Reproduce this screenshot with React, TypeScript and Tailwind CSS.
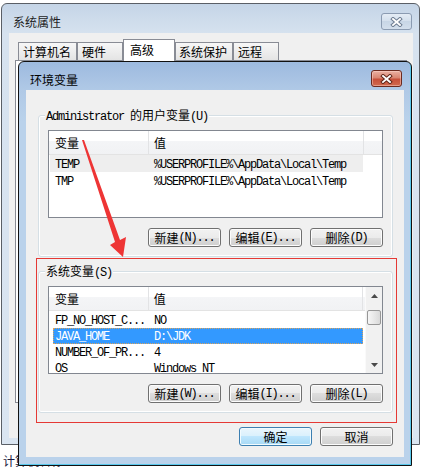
import React from "react";

const M = ({ children }: { children: React.ReactNode }) => (
  <span className="font-['Liberation_Mono',monospace] tracking-[-1.2px]">{children}</span>
);

function XGlyph({ dark }: { dark: string }) {
  return (
    <svg width="13" height="10" viewBox="0 0 13 10">
      <path d="M3 2 L10 8 M10 2 L3 8" stroke={dark} strokeWidth="3.8" strokeLinecap="square" fill="none" />
      <path d="M3 2 L10 8 M10 2 L3 8" stroke="#ffffff" strokeWidth="1.9" strokeLinecap="square" fill="none" />
    </svg>
  );
}

function Btn({ children, primary }: { children: React.ReactNode; primary?: boolean }) {
  return (
    <div
      className={
        primary
          ? "flex h-[19px] w-[73px] items-center justify-center rounded-[3px] border border-[#3c7fb1] bg-[linear-gradient(#eaf6fd_0%,#d9f0fc_50%,#bee6fd_50%,#a7d9f5_100%)] text-[12px] leading-[12px] shadow-[inset_0_0_0_1px_#f2fbfe]"
          : "flex h-[19px] w-[73px] items-center justify-center rounded-[3px] border border-[#707070] bg-[linear-gradient(#f2f2f2_0%,#ebebeb_50%,#dddddd_50%,#cfcfcf_100%)] text-[12px] leading-[12px] shadow-[inset_0_0_0_1px_#fcfcfc]"
      }
    >
      {children}
    </div>
  );
}

function Group({ legend, children }: { legend: React.ReactNode; children: React.ReactNode }) {
  return (
    <div className="h-[142px] w-[355px] rounded-[3px] border border-[#d5dfe5] shadow-[inset_0_0_0_1px_#ffffff]">
      <div className="-mt-[7px] ml-[6px] w-fit bg-[#f0f0f0] px-[1px] text-[12px] leading-[12px] text-black">{legend}</div>
      {children}
    </div>
  );
}

function Header({ wide }: { wide?: boolean }) {
  return (
    <div className="flex h-[24px] border-b border-[#e3e3e3] bg-[linear-gradient(#ffffff_0%,#ffffff_42%,#f4f5f7_42%,#f1f2f4_100%)] text-[12px] leading-[12px]">
      <div className="flex w-[100px] items-center border-r border-[#e2e3e5] pl-[6px]">变量</div>
      <div className="flex w-[215px] items-center border-r border-[#e2e3e5] pl-[5px]">值</div>
      <div className={wide ? "flex-1" : "w-[2px]"} />
    </div>
  );
}

function Arrow({ dir }: { dir: "up" | "down" }) {
  return (
    <div className="flex h-[17px] items-center justify-center">
      <svg width="7" height="4" viewBox="0 0 7 4">
        {dir === "up" ? <path d="M3.5 0 L7 4 L0 4 Z" fill="#4a4a4a" /> : <path d="M0 0 L7 0 L3.5 4 Z" fill="#4a4a4a" />}
      </svg>
    </div>
  );
}

export default function App() {
  return (
    <div className="relative h-[467px] w-[422px] overflow-hidden bg-white font-['Noto_Sans_CJK_SC',sans-serif] text-[12px] text-black">
      {/* background text */}
      <div className="absolute left-[3px] top-[455px] text-[12px] leading-[12px] text-[#1a1a40]">计算机名称</div>

      {/* Outer window: 系统属性 */}
      <div className="absolute left-[1px] top-[3px] flex h-[442px] w-[419px] flex-col rounded-t-[6px] border border-[#5a5f66] bg-[linear-gradient(#c5d5e7_0px,#d6e2ef_30px,#dae5f1_100%)]">
        <div className="flex h-[29px] items-start">
          <div className="pl-[11px] pt-[12px] text-[12px] leading-[12px] text-[#1e1e1e]">系统属性</div>
          <div className="ml-auto mr-[7px] mt-[9px] flex h-[17px] w-[31px] items-center justify-center rounded-[3px] border border-[#8b9bb1] bg-[linear-gradient(#e4ecf5,#d3dfec_50%,#c8d6e6_50%,#d3dfec)]">
            <XGlyph dark="#6e7d92" />
          </div>
        </div>
        <div className="mb-[6px] ml-[7px] mr-[6px] flex-1 bg-[#f0f0f0] px-[6px] pt-[6px]">
          <div className="flex items-end pl-[3px]">
            <div className="flex h-[18px] w-[59px] items-center border border-b-0 border-[#898c95] bg-[linear-gradient(#f7f7f7,#e4e4e4)] pl-[4px] leading-[12px]">计算机名</div>
            <div className="ml-[0px] flex h-[18px] w-[46px] items-center border border-b-0 border-[#898c95] bg-[linear-gradient(#f7f7f7,#e4e4e4)] pl-[4px] leading-[12px]">硬件</div>
            <div className="relative z-10 -mb-[1px] flex h-[22px] w-[52px] items-center border border-b-0 border-[#898c95] bg-white pb-[2px] pl-[6px] leading-[12px]">高级</div>
            <div className="flex h-[18px] w-[58px] items-center border border-b-0 border-[#898c95] bg-[linear-gradient(#f7f7f7,#e4e4e4)] pl-[3px] leading-[12px]">系统保护</div>
            <div className="flex h-[18px] w-[46px] items-center border border-b-0 border-[#898c95] bg-[linear-gradient(#f7f7f7,#e4e4e4)] pl-[4px] leading-[12px]">远程</div>
          </div>
          <div className="h-[343px] border border-[#898c95] bg-white" />
        </div>
      </div>

      {/* Inner window: 环境变量 */}
      <div className="absolute left-[18px] top-[61px] flex h-[405px] w-[394px] flex-col rounded-t-[6px] border border-[#111111] bg-[linear-gradient(#9dbadf_0px,#b0c9e6_28px,#bad2eb_60px,#bad2eb_100%)] shadow-[inset_-1px_-1px_0_#59c8ec]">
        <div className="flex h-[28px] items-start">
          <div className="pl-[11px] pt-[12px] text-[12px] leading-[12px] text-black">环境变量</div>
          <div className="ml-auto mr-[9px] mt-[8px] flex h-[17px] w-[31px] items-center justify-center rounded-[3px] border border-[#6b2a1f] bg-[linear-gradient(#eab1a3,#d98672_45%,#c7503a_55%,#d16a4f)] shadow-[inset_0_0_0_1px_rgba(255,220,210,0.45)]">
            <XGlyph dark="#5e2418" />
          </div>
        </div>

        <div className="mx-[7px] flex h-[367px] w-[378px] flex-col bg-[#f0f0f0]">
          {/* User variables */}
          <div className="ml-[12px] mt-[25px]">
            <Group
              legend={
                <>
                  <M>Administrator </M>的用户变量<M>(U)</M>
                </>
              }
            >
              <div className="ml-[9px] mt-[7px] h-[88px] w-[335px] border border-[#828790] bg-white">
                <Header wide />
                <div className="ml-[1px] flex h-[17px] w-[313px] items-center bg-[#eeeeee] leading-[12px]">
                  <div className="w-[104px] pl-[5px]"><M>TEMP</M></div>
                  <div><M>%USERPROFILE%\AppData\Local\Temp</M></div>
                </div>
                <div className="ml-[1px] flex h-[17px] w-[313px] items-center leading-[12px]">
                  <div className="w-[104px] pl-[5px]"><M>TMP</M></div>
                  <div><M>%USERPROFILE%\AppData\Local\Temp</M></div>
                </div>
              </div>
              <div className="mt-[10px] flex justify-end gap-[8px] pr-[9px]">
                <Btn>新建<M>(N)...</M></Btn>
                <Btn>编辑<M>(E)...</M></Btn>
                <Btn>删除<M>(D)</M></Btn>
              </div>
            </Group>
          </div>

          {/* Red annotation box around system variables */}
          <div className="ml-[10px] mt-[1px] h-[165px] w-[361px] border border-[#e53935]">
            <div className="ml-[1px] mt-[12px]">
              <Group
                legend={
                  <>
                    系统变量<M>(S)</M>
                  </>
                }
              >
                <div className="ml-[9px] mt-[7px] flex h-[88px] w-[335px] border border-[#828790] bg-white">
                  <div className="w-[316px] overflow-hidden">
                    <Header />
                    <div className="pt-[1px] leading-[12px]">
                      <div className="ml-[4px] flex h-[16px] w-[310px] items-center">
                        <div className="w-[101px] pl-[2px]"><M>FP_NO_HOST_C...</M></div>
                        <div><M>NO</M></div>
                      </div>
                      <div className="ml-[4px] flex h-[16px] w-[310px] items-center bg-[#3399ff] text-white outline-1 -outline-offset-1 outline-dotted outline-[#d9a35c]">
                        <div className="w-[101px] pl-[2px]"><M>JAVA_HOME</M></div>
                        <div><M>D:\JDK</M></div>
                      </div>
                      <div className="ml-[4px] flex h-[16px] w-[310px] items-center">
                        <div className="w-[101px] pl-[2px]"><M>NUMBER_OF_PR...</M></div>
                        <div><M>4</M></div>
                      </div>
                      <div className="ml-[4px] flex h-[16px] w-[310px] items-center">
                        <div className="w-[101px] pl-[2px]"><M>OS</M></div>
                        <div><M>Windows_NT</M></div>
                      </div>
                    </div>
                  </div>
                  <div className="flex w-[17px] flex-col border-l border-[#fafafa] bg-[#f1f1f1]">
                    <Arrow dir="up" />
                    <div className="mx-[1px] mt-[6px] h-[15px] rounded-[2px] border border-[#979797] bg-[linear-gradient(90deg,#f6f6f6,#e8e8e8_50%,#d9d9d9)]" />
                    <div className="flex-1" />
                    <Arrow dir="down" />
                  </div>
                </div>
                <div className="mt-[10px] flex justify-end gap-[8px] pr-[9px]">
                  <Btn>新建<M>(W)...</M></Btn>
                  <Btn>编辑<M>(I)...</M></Btn>
                  <Btn>删除<M>(L)</M></Btn>
                </div>
              </Group>
            </div>
          </div>

          <div className="mt-[4px] flex justify-end gap-[8px] pr-[11px]">
            <Btn primary>确定</Btn>
            <Btn>取消</Btn>
          </div>
        </div>
      </div>

      {/* Red annotation arrow */}
      <svg className="pointer-events-none absolute left-0 top-0" width="422" height="467" viewBox="0 0 422 467">
        <polygon points="82,140 84,140 120,240 126,237 123,257 110,245 115,242" fill="#ee3535" />
      </svg>
    </div>
  );
}
